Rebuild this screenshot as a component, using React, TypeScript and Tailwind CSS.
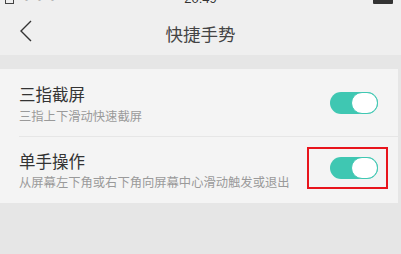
import { useState } from 'react';

const font = { fontFamily: '"Noto Sans CJK SC", "Noto Sans", sans-serif' };

function Toggle({ on, onClick }: { on: boolean; onClick: () => void }) {
  return (
    <button
      onClick={onClick}
      className={`relative w-[48px] h-[22px] rounded-full ${on ? 'bg-[#3fc7b2]' : 'bg-[#dcdcdc]'}`}
    >
      <span
        className={`absolute top-0 w-[27px] h-[22px] rounded-full bg-white border-[1.5px] border-[#3fc7b2] ${on ? 'right-0' : 'left-0'}`}
      />
    </button>
  );
}

export default function App() {
  const [three, setThree] = useState(true);
  const [oneHand, setOneHand] = useState(true);

  return (
    <div className="w-[401px] h-[254px] overflow-hidden bg-[#e6e6e6]" style={font}>
      {/* status bar, cut off at top */}
      <div className="h-[6px] bg-[#efefef] overflow-hidden">
        <div className="flex items-center px-[5px] -mt-[9px] h-[14px] text-[13px] leading-none text-[#333]">
          <div className="flex-1 flex items-center gap-[6px]">
            <span className="w-[9px] h-[12px] border border-[#444] inline-block" />
            <span className="text-[#aaa]">···</span>
          </div>
          <span style={{ fontFamily: '"Liberation Sans", sans-serif' }}>20:49</span>
          <div className="flex-1 flex justify-end">
            <span className="w-[20px] h-[11px] bg-[#333] rounded-[1px] mr-[3px]" />
          </div>
        </div>
      </div>

      {/* header */}
      <div className="h-[49px] bg-[#efefef] flex items-center relative">
        <svg className="ml-[19px]" width="13" height="22" viewBox="0 0 13 22">
          <path d="M12 1 L2 11 L12 21" fill="none" stroke="#333" strokeWidth="1.4" />
        </svg>
        <div className="absolute inset-x-0 top-[17px] text-center text-[17.5px] leading-[22px] text-[#444] pointer-events-none">
          快捷手势
        </div>
      </div>

      <div className="h-[14px]" />

      {/* settings card */}
      <div className="bg-[#f4f4f4] mr-[3px]">
        <div className="flex items-center justify-between h-[67px] pl-[19px] pr-[20px]">
          <div className="pt-[2px]">
            <div className="text-[16.5px] leading-[20px] text-[#333]">三指截屏</div>
            <div className="text-[12.3px] leading-[16px] mt-[4px] text-[#9a9a9a]">三指上下滑动快速截屏</div>
          </div>
          <Toggle on={three} onClick={() => setThree(!three)} />
        </div>
        <div className="ml-[19px] h-px bg-[#e6e6e6]" />
        <div className="flex items-center justify-between h-[66px] pl-[19px] pr-[20px]">
          <div>
            <div className="text-[16.5px] leading-[20px] text-[#333]">单手操作</div>
            <div className="text-[12.3px] leading-[16px] mt-[3px] text-[#9a9a9a]">从屏幕左下角或右下角向屏幕中心滑动触发或退出</div>
          </div>
          <div className="relative">
            <div className="absolute -left-[23px] -top-[10px] w-[81px] h-[42px] border-2 border-[#e8141c]" />
            <Toggle on={oneHand} onClick={() => setOneHand(!oneHand)} />
          </div>
        </div>
      </div>
    </div>
  );
}
